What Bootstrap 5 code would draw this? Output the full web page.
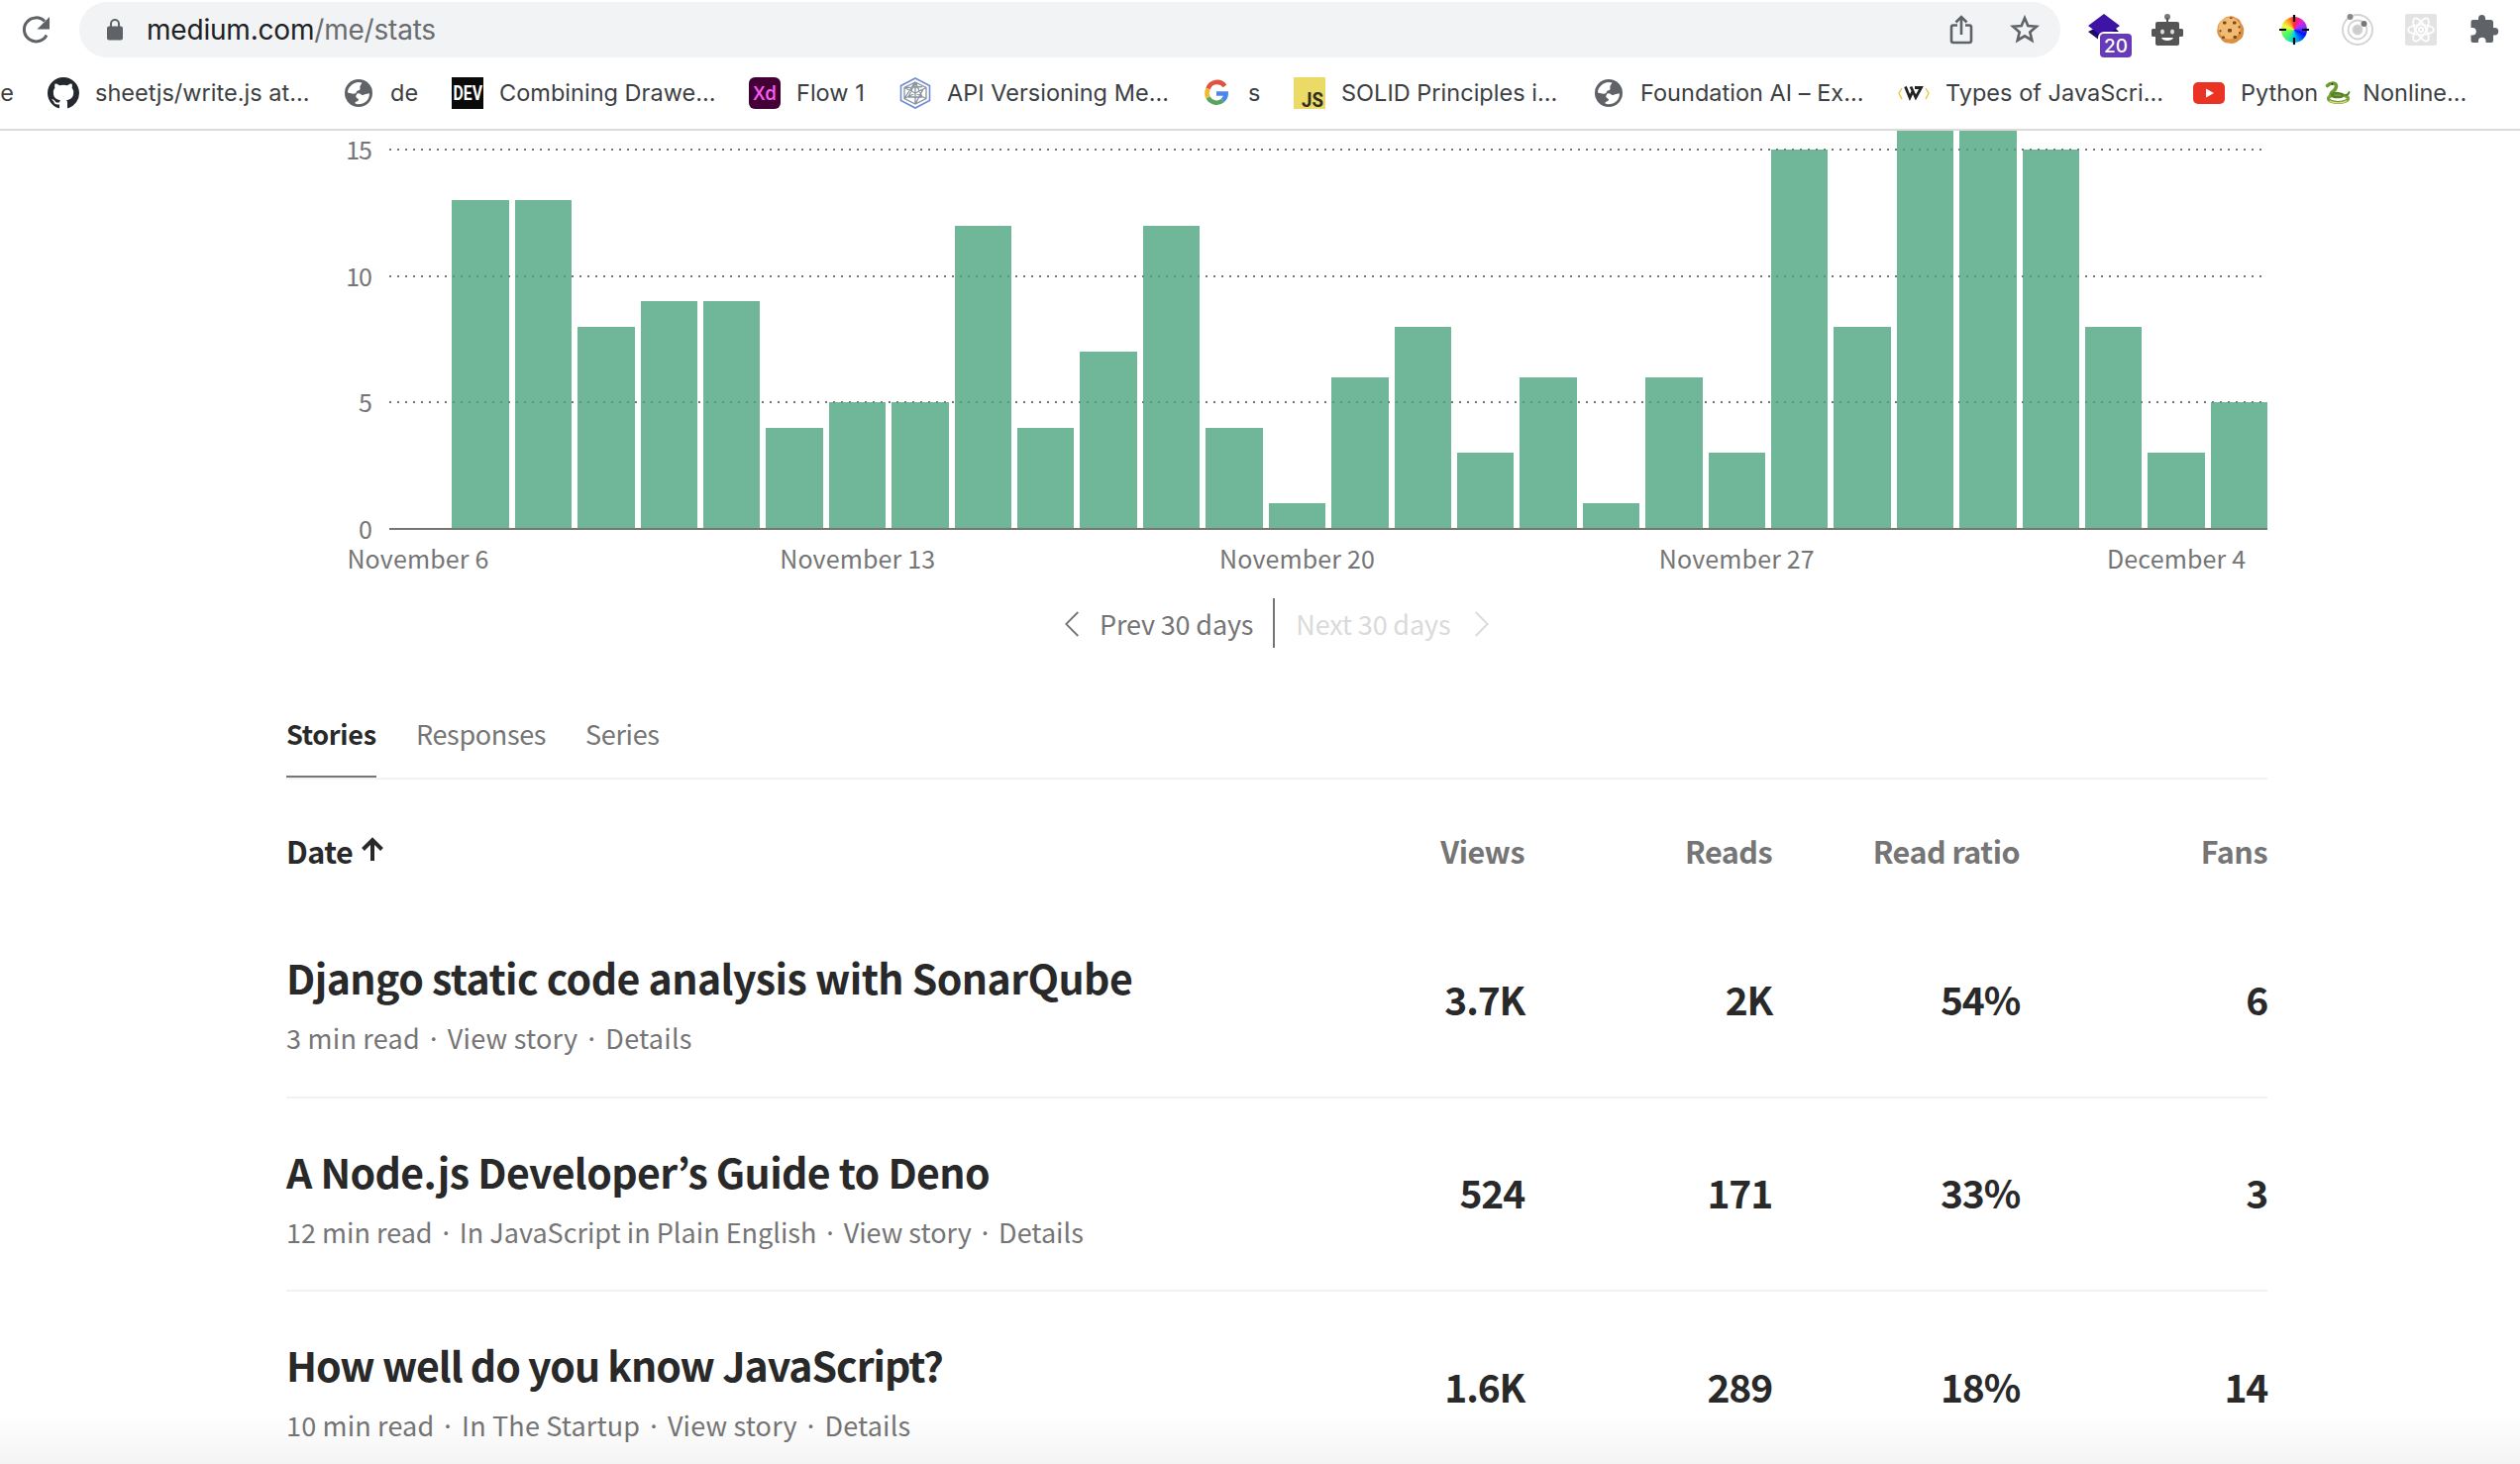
<!DOCTYPE html>
<html lang="en">
<head>
<meta charset="utf-8">
<title>Stats – Medium</title>
<link href="https://cdn.jsdelivr.net/npm/bootstrap@5.3.0/dist/css/bootstrap.min.css" rel="stylesheet">
<script src="https://cdn.jsdelivr.net/npm/bootstrap@5.3.0/dist/js/bootstrap.bundle.min.js"></script>
<style>
  body { width: 2544px; height: 1478px; overflow: hidden; background: #fff; color: #292929; font-family: "Noto Sans CJK JP", "Noto Sans", sans-serif; font-size: 27px; line-height: 1; white-space: nowrap; }
  svg { display: block; flex: none; overflow: visible; }

  /* browser chrome */
  .chrome { height: 132px; border-bottom: 2px solid #dadada; font-family: Inter, "Noto Sans", sans-serif; color: #3c4043; }
  .toolbar { height: 60px; padding-left: 20px; }
  .omnibox { width: 2000px; height: 56px; margin-left: 28px; padding: 0 20px 0 28px; background: #f1f3f4; border-radius: 28px; font-size: 28px; color: #696c70; }
  .omnibox .url { margin-left: 24px; letter-spacing: -.2px; }
  .omnibox b { font-weight: 400; color: #202124; }
  .exts { gap: 32px; margin-left: 28px; }
  .count-badge { left: 12px; top: 20px; width: 32px; height: 24px; border-radius: 4px; background: #673ab7; color: #fff; font-size: 19px; font-weight: 500; box-shadow: 0 0 0 2px #fff; }
  .bookmarks { display: grid; height: 68px; grid-template-columns: 48px 298px 110px 300px 152px 304px 94px 302px 308px 298px 330px; font-size: 23.5px; align-items: center; }
  .bookmarks > div { display: flex; align-items: center; gap: 16px; letter-spacing: .02px; }
  .bookmarks .clipped { justify-content: flex-end; padding-right: 34px; }

  /* chart */
  .chart { height: 403px; padding-right: 255px; }
  .yaxis { width: 393px; padding-right: 18px; font-size: 25px; letter-spacing: -1px; color: #757575; }
  .yaxis div { height: 127.67px; text-align: right; line-height: 36px; }
  .yaxis div:last-child { height: 36px; }
  .plot { gap: 6px; border-bottom: 2px solid #757575; overflow: hidden; --dots: repeating-linear-gradient(90deg, #757575 0 2px, transparent 2px 8px);
    background: var(--dots) 0 18px / 100% 2px no-repeat, var(--dots) 0 146px / 100% 2px no-repeat, var(--dots) 0 273px / 100% 2px no-repeat; }
  .plot div { flex: 1 0 0; background: rgba(75,165,126,.8); height: calc(var(--n) * 25.53px - 1px); }
  .xaxis { display: grid; grid-template-columns: repeat(5, 443.8px); margin-left: 200px; height: 53px; padding-top: 3px; align-items: center; text-align: center; font-size: 25px; letter-spacing: .15px; color: #757575; }
  .pager { height: 50px; margin-top: 16px; padding-left: 1075px; color: #757575; letter-spacing: -.15px; }
  .pager .next { color: #dadada; }
  .pager .rule { width: 2px; height: 50px; background: #757575; margin: 0 21px 0 20px; }

  /* stories */
  .stats { width: 2000px; margin-left: 289px; }
  .tabs { height: 83px; margin-top: 50px; border-bottom: 2px solid #f2f2f2; gap: 40px; color: #757575; letter-spacing: -.35px; }
  .tabs div { height: 81px; line-height: 73px; border-bottom: 2px solid transparent; }
  .tabs .on { color: #292929; font-weight: 700; border-color: #757575; letter-spacing: -.3px; width: 91px; }
  .heads { height: 126px; padding-top: 19px; font-size: 30.5px; font-weight: 700; letter-spacing: -.5px; color: #757575; }
  .num { width: 250px; text-align: right; }
  .story { height: 195.5px; border-bottom: 2px solid #f2f2f2; }
  .story h2 { font-size: 41px; font-weight: 700; line-height: 50px; margin: 48px 0 15px; }
  .story p { margin: 0; line-height: 44px; color: #757575; }
  .story .num { font-size: 39px; font-weight: 700; letter-spacing: -1.2px; line-height: 50px; margin-top: 69.5px; }
  .fade-end { left: 0; bottom: 0; width: 2544px; height: 50px; background: linear-gradient(rgba(0,0,0,0), rgba(0,0,0,.045)); }
</style>
</head>
<body class="position-relative">

<svg width="0" height="0" class="position-absolute">
  <symbol id="globe" viewBox="0 0 28 28">
    <circle cx="14" cy="14" r="14" fill="#5f6368"/>
    <path d="M14 3C8 3.500 3 8 3 13.500l5.500 1.200c2.200 0 3.200-.7 3.500-2.200.4-1.500 3-.8 3.500-2.500.3-1.500-.8-2.500.5-4L17.500 3.400z" fill="#fff"/>
    <path d="M12.500 14.500c2-.8 4 .2 4.500 1.500 2.500.3 3.500-1.500 8-1.500C25 21 20 25.500 13 25.300l-2.500-.8c-.5-2.500 3-1.500 3.500-3.500.2-1.500-2.800-2-2.800-4z" fill="#fff"/>
  </symbol>
</svg>

<header class="chrome">
  <div class="toolbar d-flex align-items-center">
    <svg width="32" height="32" viewBox="0 0 32 32"><path d="M27 21.500A12 12 0 1 1 25 7.500" fill="none" stroke="#5f6368" stroke-width="3"/><path d="M30 3v12.500H17.500z" fill="#5f6368"/></svg>
    <div class="omnibox d-flex align-items-center">
      <svg width="16" height="22" viewBox="0 0 16 22"><rect y="7.500" width="16" height="14" rx="2" fill="#5f6368"/><path d="M4 8.500V5a4 4 0 0 1 8 0v3.500" fill="none" stroke="#5f6368" stroke-width="2"/></svg>
      <span class="url"><b>medium.com</b>/me/stats</span>
      <svg class="ms-auto" width="24" height="30" viewBox="0 0 24 30" fill="none" stroke="#5f6368" stroke-width="2.600"><path d="M8 10.500H4a2 2 0 0 0-2 2V26a2 2 0 0 0 2 2h16a2 2 0 0 0 2-2V12.500a2 2 0 0 0-2-2h-4M12 20V2M6.500 7.500 12 2l5.500 5.500"/></svg>
      <svg style="margin-left:36px" width="32" height="32" viewBox="0 0 32 32"><path d="M16 4.200l3.300 7.900 8.500.7-6.500 5.600 2 8.300-7.300-4.400-7.300 4.400 2-8.300-6.500-5.600 8.500-.7z" fill="none" stroke="#5f6368" stroke-width="2.600"/></svg>
    </div>
    <div class="exts d-flex align-items-center">
      <div class="position-relative">
        <svg width="32" height="32" viewBox="0 0 32 32"><path d="M0 18 6 15l22 0 4 4-16 11z" fill="#1e0a6b"/><path d="M16 0 32 12 16 24 0 12z" fill="#3d14a5"/></svg>
        <span class="count-badge position-absolute d-flex align-items-center justify-content-center">20</span>
      </div>
      <svg width="32" height="32" viewBox="0 0 32 32"><circle cx="16" cy="3" r="3" fill="#777"/><path d="M15 4h2v5h-2zM6 8h20a2 2 0 0 1 2 2v5h2.500a1.500 1.500 0 0 1 1.500 1.500v5a1.500 1.500 0 0 1-1.500 1.500H28v7a2 2 0 0 1-2 2H6a2 2 0 0 1-2-2v-7H1.500A1.500 1.500 0 0 1 0 21.500v-5A1.500 1.500 0 0 1 1.500 15H4v-5a2 2 0 0 1 2-2z" fill="#555"/><ellipse cx="11" cy="18" rx="2" ry="2.600" fill="#ddd"/><ellipse cx="21" cy="18" rx="2" ry="2.600" fill="#ddd"/><path d="M10 24h12c-1 4-11 4-12 0z" fill="#fff"/></svg>
      <svg width="32" height="32" viewBox="0 0 32 32"><path d="M15 2.500c2-.8 5 .5 6 1.500 3 .3 5 3 5.500 5.500 2 2.500 3.500 6 2.500 9 0 4-2 7-5 8.500-3 3-7 3.500-10 2.500-4 0-7-2-8.500-5C3 22 1.500 18 2.500 15c0-4 2-7 5-9 2-2.500 5-3.500 7.500-3.500z" fill="#dc9042"/><circle cx="14.500" cy="14.500" r="11" fill="#f2bb72"/><g fill="#7a4a22"><rect x="8" y="7.500" width="3.500" height="3" rx="1"/><rect x="18" y="7.500" width="3.500" height="3" rx="1"/><rect x="13" y="15" width="4" height="3.500" rx="1"/><rect x="4.500" y="16" width="2" height="2.500" rx="1"/><rect x="23.500" y="12" width="2" height="2.500" rx="1"/><rect x="7" y="22.500" width="3" height="2.500" rx="1"/><rect x="18.500" y="22" width="3.500" height="3" rx="1"/><rect x="24" y="18" width="2" height="2.500" rx="1"/><rect x="15" y="3.500" width="2.500" height="1.500"/></g></svg>
      <svg width="32" height="32" viewBox="0 0 32 32"><foreignObject x="3" y="3" width="26" height="26"><div style="width:26px;height:26px;border-radius:50%;background:conic-gradient(#f23,#d2d 45deg,#83f 75deg,#01f 115deg,#08e 155deg,#0ce 180deg,#3e8 215deg,#7f4 260deg,#ef4 290deg,#fa2 325deg,#f23)"></div></foreignObject><path d="M16 1v7M16 24v7M1 16h7M24 16h7" stroke="#000" stroke-width="2.200"/></svg>
      <svg width="32" height="32" viewBox="0 0 32 32" fill="none" stroke="#d2d2d2" stroke-width="1.800"><circle cx="16" cy="16" r="15"/><circle cx="16" cy="16" r="9.500"/><circle cx="16" cy="16" r="4.500" fill="#ccc"/><circle cx="8.500" cy="3" r="3" fill="#888" stroke="none"/><circle cx="22.500" cy="10" r="3" fill="#777" stroke="none"/></svg>
      <svg width="32" height="32" viewBox="0 0 32 32" fill="none" stroke="#fff" stroke-width="1.700"><rect width="32" height="32" rx="2" fill="#e3e3e3" stroke="none"/><ellipse cx="16" cy="16" rx="13" ry="5"/><ellipse cx="16" cy="16" rx="13" ry="5" transform="rotate(60 16 16)"/><ellipse cx="16" cy="16" rx="13" ry="5" transform="rotate(120 16 16)"/><circle cx="16" cy="16" r="2.200"/></svg>
      <svg width="32" height="32" viewBox="0 0 32 32"><path d="M4.500 6H10V4.500a3.500 3.500 0 0 1 7 0V6h5.500a2.500 2.500 0 0 1 2.500 2.500V14h1.500a3.700 3.700 0 0 1 0 7.400H25v5.600a2 2 0 0 1-2 2h-5.500v-1.500a3.800 3.800 0 0 0-7.600 0V29H4.500a2 2 0 0 1-2-2v-5.500H4a3.800 3.800 0 0 0 0-7.600H2.500V8a2 2 0 0 1 2-2z" fill="#5f6368"/></svg>
    </div>
  </div>
  <nav class="bookmarks">
    <div class="clipped">te</div>
    <div><svg width="32" height="32" viewBox="0 0 16 16"><path fill="#24292f" d="M8 0C3.580 0 0 3.580 0 8c0 3.540 2.290 6.530 5.470 7.590.4.070.55-.17.55-.38 0-.19-.01-.82-.01-1.490-2.010.37-2.530-.49-2.690-.94-.09-.23-.48-.94-.82-1.130-.28-.15-.68-.52-.01-.53.63-.01 1.080.58 1.230.82.72 1.210 1.870.87 2.330.66.07-.52.28-.87.51-1.070-1.780-.2-3.640-.89-3.640-3.950 0-.87.31-1.590.82-2.150-.08-.2-.36-1.020.08-2.120 0 0 .67-.21 2.200.82.64-.18 1.320-.27 2-.27s1.360.09 2 .27c1.530-1.040 2.200-.82 2.200-.82.44 1.100.16 1.920.08 2.120.51.56.82 1.270.82 2.150 0 3.070-1.870 3.750-3.650 3.950.29.25.54.73.54 1.480 0 1.070-.01 1.930-.01 2.200 0 .21.15.46.55.38A8.010 8.010 0 0 0 16 8c0-4.420-3.580-8-8-8z"/></svg>sheetjs/write.js at...</div>
    <div><svg width="32" height="32" viewBox="-2 -2 32 32"><use href="#globe" width="28" height="28"/></svg>de</div>
    <div><svg width="32" height="32" viewBox="0 0 32 32"><rect width="32" height="32" fill="#0a0a0a"/><text x="1.500" y="23" textLength="29.500" lengthAdjust="spacingAndGlyphs" font-family="Roboto" font-weight="700" font-size="20" fill="#fff">DEV</text></svg>Combining Drawe...</div>
    <div><svg width="32" height="32" viewBox="0 0 32 32"><rect width="32" height="32" rx="6" fill="#430036"/><text x="4.500" y="22.500" textLength="23.500" lengthAdjust="spacingAndGlyphs" font-family="Open Sans" font-weight="600" font-size="20.500" fill="#f75eee">Xd</text></svg>Flow 1</div>
    <div><svg width="32" height="32" viewBox="0 0 32 32" fill="none"><path d="M16 1 30.500 8.500v15L16 31 1.500 23.500v-15z" stroke="#6f8bd8" stroke-width="1.600"/><path d="M16 5 27 10.500v11L16 27 5 21.500v-11zM16 5v22M5 10.500l22 11M27 10.500l-22 11M16 5 9 20M16 5l7 15M5 10.500l18-1M9 20l14 0M5 21.500l11-17M16 27l8-15" stroke="#8a93a0" stroke-width="1.300"/></svg>API Versioning Me...</div>
    <div><svg width="32" height="32" viewBox="0 0 32 32" fill="none" stroke-width="4.600"><path d="M24.500 8.800A9.700 9.700 0 0 0 7.600 11.500" stroke="#e15241"/><path d="M7.600 11.500a9.700 9.700 0 0 0 0 9" stroke="#f2b92f"/><path d="M7.600 20.500a9.700 9.700 0 0 0 14.700 3" stroke="#58a65c"/><path d="M22.300 23.500A9.500 9.500 0 0 0 25.700 16.500H16" stroke="#4f86ec"/></svg>s</div>
    <div><svg width="32" height="32" viewBox="0 0 32 32"><rect width="32" height="32" fill="#ecda66"/><text x="8" y="29.500" textLength="22" lengthAdjust="spacingAndGlyphs" font-family="Roboto" font-weight="700" font-size="20" fill="#2f2e25">JS</text></svg>SOLID Principles i...</div>
    <div><svg width="32" height="32" viewBox="-2 -2 32 32"><use href="#globe" width="28" height="28"/></svg>Foundation AI – Ex...</div>
    <div><svg width="32" height="32" viewBox="0 0 32 32" fill="none"><path d="M4 11 1 16l3 6M28 11l3 5-3 6" stroke="#e5c93c" stroke-width="1.400"/><path d="m7.500 9.500 4.500 11 3-6.500M13 9.500l5 11 5.500-10H17" stroke="#222" stroke-width="2.800"/></svg>Types of JavaScri...</div>
    <div><svg width="32" height="32" viewBox="0 0 32 32"><rect y="5" width="32" height="22" rx="5" fill="#ea3323"/><path d="M13 11.500v9l8-4.500z" fill="#fff"/></svg><span class="d-flex align-items-center">Python
      <svg style="margin:0 12px 0 8px" width="25" height="22" viewBox="0 0 25 22" fill="none" stroke-linecap="round"><path d="M1.500 3.500C5 0 11 0 10.500 4.500S6 9 5 12" stroke="#6f9a33" stroke-width="3.600"/><ellipse cx="12.500" cy="16.500" rx="10" ry="4" stroke="#7e9f35" stroke-width="3.200"/><path d="M6 12.500c3-2.500 11-1.500 11 .8s-7 2.200-10 1" stroke="#54822a" stroke-width="2.400"/><path d="M4 19c4 2.500 13 2.500 17 0" stroke="#dbe08a" stroke-width="1.300"/><path d="M20 13c3 0 3-2 3.500-3" stroke="#54822a" stroke-width="1.800"/><circle cx="6.500" cy="1.800" r=".9" fill="#222"/></svg>Nonline...</span></div>
  </nav>
</header>

<section class="chart d-flex">
  <div class="yaxis"><div>15</div><div>10</div><div>5</div><div>0</div></div>
  <div class="plot d-flex flex-fill align-items-end" id="plot"></div>
</section>
<div class="xaxis"><span>November 6</span><span>November 13</span><span>November 20</span><span>November 27</span><span>December 4</span></div>

<div class="pager d-flex align-items-center">
  <svg width="14" height="26" viewBox="0 0 14 26"><path d="M13.300 2 1.300 14l12 12" fill="none" stroke="#757575" stroke-width="1.800"/></svg>
  <span style="margin-left:21px">Prev 30 days</span>
  <span class="rule"></span>
  <span class="next">Next 30 days</span>
  <svg class="next" style="margin-left:25px" width="14" height="26" viewBox="0 0 14 26"><path d="m.7 2 12 12-12 12" fill="none" stroke="currentColor" stroke-width="1.800"/></svg>
</div>

<main class="stats">
  <div class="tabs d-flex"><div class="on">Stories</div><div>Responses</div><div>Series</div></div>
  <div class="heads d-flex align-items-center">
    <div class="flex-fill d-flex align-items-center" style="color:#292929">Date
      <svg style="margin:-6px 0 0 9px" width="22" height="24" viewBox="0 0 22 24"><path d="M11 24V3M1.500 12.500 11 3l9.500 9.500" fill="none" stroke="#292929" stroke-width="4"/></svg></div>
    <div class="num">Views</div><div class="num">Reads</div><div class="num">Read ratio</div><div class="num">Fans</div>
  </div>
  <div class="story d-flex">
    <div class="flex-fill"><h2 style="letter-spacing:-.57px">Django static code analysis with SonarQube</h2><p style="letter-spacing:.23px">3 min read · View story · Details</p></div>
    <div class="num">3.7K</div><div class="num">2K</div><div class="num">54%</div><div class="num">6</div>
  </div>
  <div class="story d-flex">
    <div class="flex-fill"><h2 style="letter-spacing:-.6px">A Node.js Developer’s Guide to Deno</h2><p>12 min read · In JavaScript in Plain English · View story · Details</p></div>
    <div class="num">524</div><div class="num">171</div><div class="num">33%</div><div class="num">3</div>
  </div>
  <div class="story d-flex border-0">
    <div class="flex-fill"><h2 style="letter-spacing:-1.03px">How well do you know JavaScript?</h2><p style="letter-spacing:.16px">10 min read · In The Startup · View story · Details</p></div>
    <div class="num">1.6K</div><div class="num">289</div><div class="num">18%</div><div class="num">14</div>
  </div>
</main>
<div class="fade-end position-absolute"></div>

<script>
  // daily views, November 6 to December 5
  const views = [0,13,13,8,9,9,4,5,5,12,4,7,12,4,1,6,8,3,6,1,6,3,15,8,17,17,15,8,3,5];
  document.getElementById('plot').innerHTML = views.map(n => `<div style="--n:${n}"></div>`).join('');
</script>
</body>
</html>
